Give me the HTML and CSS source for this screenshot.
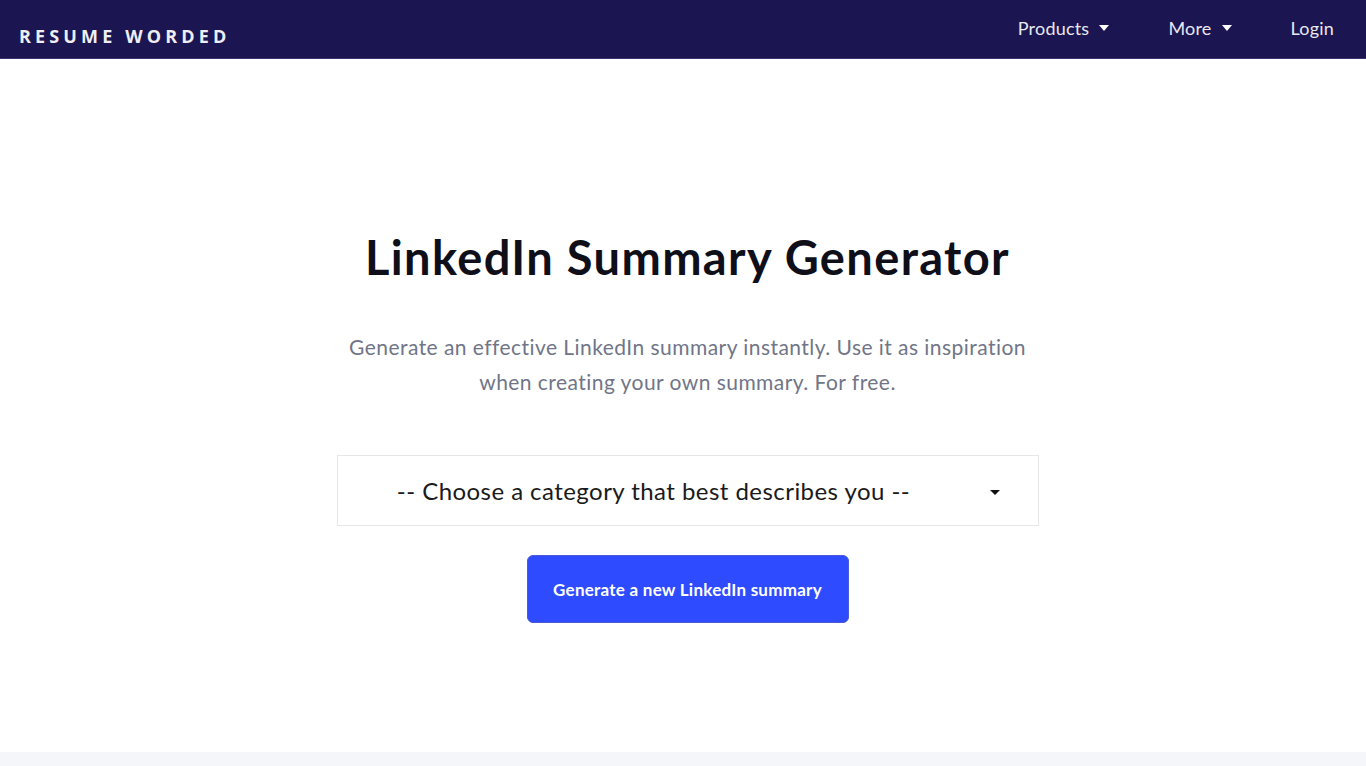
FILE: index.html
```html
<!DOCTYPE html>
<html lang="en">
<head>
<meta charset="utf-8">
<title>LinkedIn Summary Generator</title>
<link rel="stylesheet" href="styles.css">
</head>
<body>
<header class="topbar">
  <div class="logo">RESUME WORDED</div>
  <nav class="nav">
    <a class="nav-item">Products <span class="caret"></span></a>
    <a class="nav-item">More <span class="caret"></span></a>
    <a class="nav-item">Login</a>
  </nav>
</header>
<main class="hero">
  <h1 class="title">LinkedIn Summary Generator</h1>
  <p class="lead">Generate an effective LinkedIn summary instantly. Use it as inspiration<br>when creating your own summary. For free.</p>
  <div class="select">
    <span class="select-text">-- Choose a category that best describes you --</span>
    <span class="select-caret"></span>
  </div>
  <button class="btn">Generate a new LinkedIn summary</button>
</main>
<footer class="foot"></footer>
</body>
</html>
```
FILE: styles.css
```css
* { box-sizing: border-box; }
html, body { margin: 0; padding: 0; }
body {
  font-family: Lato, "Noto Sans", "Liberation Sans", sans-serif;
  background: #fff;
  color: #111;
  height: 766px;
  display: flex;
  flex-direction: column;
}
.topbar {
  height: 59px;
  background: #1b1551;
  display: flex;
  align-items: center;
  justify-content: space-between;
  padding: 0 32px 0 19px;
  border-bottom: 1px solid #3a3470;
}
.logo {
  color: #eeeef4;
  font-family: "Open Sans", "Liberation Sans", sans-serif;
  font-weight: 700;
  font-size: 18px;
  letter-spacing: 4.15px;
  padding-top: 14px;
}
.nav { display: flex; align-items: center; }
.nav-item {
  color: #e8e8f0;
  font-size: 18px;
  letter-spacing: 0.2px;
  display: flex;
  align-items: center;
  gap: 10px;
  margin-left: 59px;
  margin-bottom: 2px;
}
.caret {
  width: 0; height: 0;
  border-left: 5.5px solid transparent;
  border-right: 5.5px solid transparent;
  border-top: 6px solid #fff;
}
.hero {
  flex: 1;
  display: flex;
  flex-direction: column;
  align-items: center;
  padding-top: 170px;
  padding-left: 9px;
}
.title {
  margin: 0;
  font-size: 47px;
  font-weight: 700;
  color: #0f0f1a;
  letter-spacing: 1.35px;
}
.lead {
  margin: 44px 0 0;
  text-align: center;
  font-size: 21px;
  line-height: 35px;
  letter-spacing: 0.45px;
  color: #707588;
}
.select {
  margin-top: 56px;
  width: 702px;
  height: 71px;
  border: 1px solid #e6e6e6;
  display: flex;
  align-items: center;
  justify-content: center;
  position: relative;
  font-size: 24px;
  letter-spacing: 0.45px;
  color: #1a1a1a;
  font-weight: 400;
}
.select-text { margin-left: -68px; }
.select-caret {
  position: absolute;
  right: 38px;
  top: 34px;
  width: 0; height: 0;
  border-left: 5px solid transparent;
  border-right: 5px solid transparent;
  border-top: 5px solid #111;
}
.btn {
  margin-top: 29px;
  width: 322px;
  height: 68px;
  background: #2e4bff;
  border: 1px solid #4a5ad8;
  border-radius: 6px;
  color: #fff;
  font-family: inherit;
  font-size: 17px;
  letter-spacing: 0.25px;
  font-weight: 700;
}
.foot {
  height: 14px;
  background: #f5f6f9;
}
```
